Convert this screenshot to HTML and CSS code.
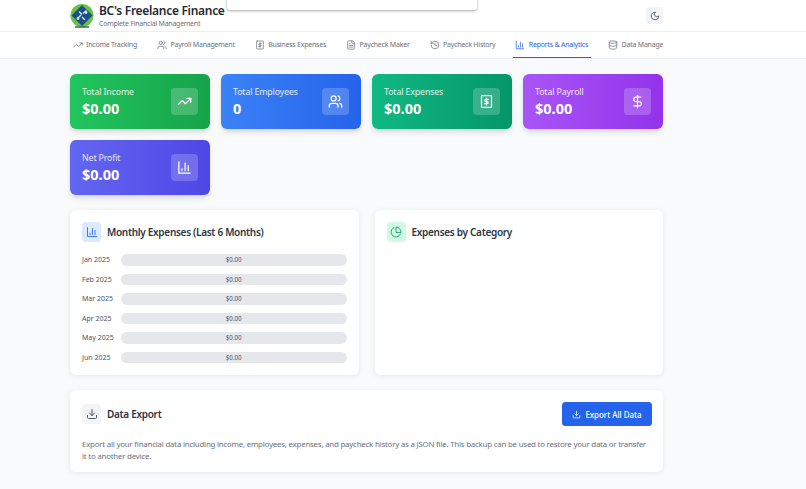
FILE: index.html
```html
<!DOCTYPE html>
<html lang="en">
<head>
<meta charset="utf-8">
<title>BC's Freelance Finance</title>
<link rel="stylesheet" href="styles.css">
</head>
<body>
<svg class="defs" width="0" height="0">
  <symbol id="i-trend" viewBox="0 0 24 24"><path d="M22 7 13.500 15.500 8.500 10.500 2 17"/><path d="M16 7h6v6"/></symbol>
  <symbol id="i-users" viewBox="0 0 24 24"><path d="M16 21v-2a4 4 0 0 0-4-4H6a4 4 0 0 0-4 4v2"/><circle cx="9" cy="7" r="4"/><path d="M22 21v-2a4 4 0 0 0-3-3.870"/><path d="M16 3.130a4 4 0 0 1 0 7.750"/></symbol>
  <symbol id="i-bill" viewBox="0 0 24 24"><rect x="4" y="2.500" width="16" height="19" rx="1"/><path d="M15 8.500H11a1.700 1.700 0 0 0 0 3.500h2a1.700 1.700 0 0 1 0 3.500H9"/><path d="M12 6.500v11"/></symbol>
  <symbol id="i-file" viewBox="0 0 24 24"><path d="M15 2H6a2 2 0 0 0-2 2v16a2 2 0 0 0 2 2h12a2 2 0 0 0 2-2V7Z"/><path d="M14 2v4a2 2 0 0 0 2 2h4"/><path d="M16 13H8"/><path d="M16 17H8"/><path d="M10 9H8"/></symbol>
  <symbol id="i-history" viewBox="0 0 24 24"><path d="M3 12a9 9 0 1 0 9-9 9.750 9.750 0 0 0-6.740 2.740L3 8"/><path d="M3 3v5h5"/><path d="M12 7v5l4 2"/></symbol>
  <symbol id="i-chart" viewBox="0 0 24 24"><path d="M3 3v18h18"/><path d="M18 17V9"/><path d="M13 17V5"/><path d="M8 17v-3"/></symbol>
  <symbol id="i-db" viewBox="0 0 24 24"><ellipse cx="12" cy="5" rx="9" ry="3"/><path d="M3 5v14a9 3 0 0 0 18 0V5"/><path d="M3 12a9 3 0 0 0 18 0"/></symbol>
  <symbol id="i-dollar" viewBox="0 0 24 24"><path d="M12 2v20"/><path d="M17 5H9.500a3.500 3.500 0 0 0 0 7h5a3.500 3.500 0 0 1 0 7H6"/></symbol>
  <symbol id="i-moon" viewBox="0 0 24 24"><path d="M12 3a6 6 0 0 0 9 9 9 9 0 1 1-9-9Z"/></symbol>
  <symbol id="i-pie" viewBox="0 0 24 24"><path d="M21.210 15.890A10 10 0 1 1 8 2.830"/><path d="M22 12A10 10 0 0 0 12 2v10z"/></symbol>
  <symbol id="i-down" viewBox="0 0 24 24"><path d="M21 15v4a2 2 0 0 1-2 2H5a2 2 0 0 1-2-2v-4"/><path d="m7 10 5 5 5-5"/><path d="M12 15V3"/></symbol>
</svg>

<div class="popup"></div>

<header class="topbar">
  <div class="wrap topbar-row">
    <div class="brand">
      <svg class="logo" viewBox="0 0 24 24">
        <circle cx="12" cy="11.500" r="11.500" fill="#6cc04a"/>
        <path d="M12 1 22.500 11.500 12 22 1.500 11.500Z" fill="#1b4f86"/>
        <path d="M7.500 14.500l3.500-3.500M13 9.500l3.500-3M9 7.500l3 3M12 13l3 3" stroke="#cfe8f2" stroke-width="1.400" fill="none"/>
        <circle cx="8" cy="14.500" r="1.400" fill="#cfe8f2"/><circle cx="16" cy="8.500" r="1.400" fill="#cfe8f2"/>
        <path d="M5 23h14" stroke="#1d6b3a" stroke-width="1.400"/>
      </svg>
      <div class="brand-text">
        <div class="brand-name">BC's Freelance Finance</div>
        <div class="brand-sub">Complete Financial Management</div>
      </div>
    </div>
    <button class="theme"><svg class="ic"><use href="#i-moon"/></svg></button>
  </div>
</header>

<nav class="tabs">
  <div class="wrap tabs-row">
    <a class="tab"><svg class="ic"><use href="#i-trend"/></svg>Income Tracking</a>
    <a class="tab"><svg class="ic"><use href="#i-users"/></svg>Payroll Management</a>
    <a class="tab"><svg class="ic"><use href="#i-bill"/></svg>Business Expenses</a>
    <a class="tab"><svg class="ic"><use href="#i-file"/></svg>Paycheck Maker</a>
    <a class="tab"><svg class="ic"><use href="#i-history"/></svg>Paycheck History</a>
    <a class="tab active"><svg class="ic"><use href="#i-chart"/></svg>Reports &amp; Analytics</a>
    <a class="tab"><svg class="ic"><use href="#i-db"/></svg>Data Management</a>
  </div>
</nav>

<main class="wrap main">
  <section class="stats">
    <div class="stat green"><div><div class="stat-label">Total Income</div><div class="stat-value">$0.00</div></div><span class="stat-icon"><svg class="ic"><use href="#i-trend"/></svg></span></div>
    <div class="stat blue"><div><div class="stat-label">Total Employees</div><div class="stat-value">0</div></div><span class="stat-icon"><svg class="ic"><use href="#i-users"/></svg></span></div>
    <div class="stat teal"><div><div class="stat-label">Total Expenses</div><div class="stat-value">$0.00</div></div><span class="stat-icon"><svg class="ic"><use href="#i-bill"/></svg></span></div>
    <div class="stat purple"><div><div class="stat-label">Total Payroll</div><div class="stat-value">$0.00</div></div><span class="stat-icon"><svg class="ic"><use href="#i-dollar"/></svg></span></div>
    <div class="stat indigo"><div><div class="stat-label">Net Profit</div><div class="stat-value">$0.00</div></div><span class="stat-icon"><svg class="ic"><use href="#i-chart"/></svg></span></div>
  </section>

  <section class="panels">
    <div class="panel">
      <div class="panel-head"><span class="chip chip-blue"><svg class="ic"><use href="#i-chart"/></svg></span><h2>Monthly Expenses (Last 6 Months)</h2></div>
      <div class="bars">
        <div class="bar-row"><span class="bar-month">Jan 2025</span><div class="bar">$0.00</div></div>
        <div class="bar-row"><span class="bar-month">Feb 2025</span><div class="bar">$0.00</div></div>
        <div class="bar-row"><span class="bar-month">Mar 2025</span><div class="bar">$0.00</div></div>
        <div class="bar-row"><span class="bar-month">Apr 2025</span><div class="bar">$0.00</div></div>
        <div class="bar-row"><span class="bar-month">May 2025</span><div class="bar">$0.00</div></div>
        <div class="bar-row"><span class="bar-month">Jun 2025</span><div class="bar">$0.00</div></div>
      </div>
    </div>
    <div class="panel">
      <div class="panel-head"><span class="chip chip-green"><svg class="ic"><use href="#i-pie"/></svg></span><h2>Expenses by Category</h2></div>
    </div>
  </section>

  <section class="panel export">
    <div class="export-head">
      <div class="panel-head flat"><span class="chip chip-gray"><svg class="ic"><use href="#i-down"/></svg></span><h2>Data Export</h2></div>
      <button class="export-btn"><svg class="ic"><use href="#i-down"/></svg>Export All Data</button>
    </div>
    <p class="export-text">Export all your financial data including income, employees, expenses, and paycheck history as a JSON file. This backup can be used to restore your data or transfer it to another device.</p>
  </section>
</main>
</body>
</html>
```

FILE: styles.css
```css
* { box-sizing: border-box; }
html, body { margin: 0; height: 489px; overflow: hidden; }
body {
  background: #f9fafb;
  color: #1f2937;
  font-family: "Noto Sans", "Open Sans", sans-serif;
  position: relative;
}
.defs { position: absolute; }
.ic {
  width: 1em; height: 1em; fill: none; stroke: currentColor;
  stroke-width: 2; stroke-linecap: round; stroke-linejoin: round; flex: none;
}
.wrap { width: 593px; margin-left: 70px; }

.popup {
  position: absolute; left: 227px; top: -20px; width: 250px; height: 30px;
  background: #fff; border-radius: 3px; z-index: 5;
  box-shadow: 0 1px 3px rgba(0,0,0,.35);
}

.topbar { background: #fff; height: 31px; }
.topbar-row { display: flex; justify-content: space-between; align-items: center; height: 31px; }
.brand { display: flex; align-items: center; gap: 5px; }
.logo { width: 24px; height: 24px; }
.brand-name { font-size: 12px; font-weight: 600; line-height: 15px; letter-spacing: -.3px; color: #1f2937; white-space: nowrap; }
.brand-sub { font-size: 7px; line-height: 9px; letter-spacing: -.25px; color: #6b7280; margin-top: 1px; }
.theme {
  width: 17px; height: 17px; border: 0; border-radius: 4px; padding: 0;
  background: #f3f4f6; color: #4b5563; font-size: 10px;
  display: flex; align-items: center; justify-content: center;
}

.tabs { background: #fff; height: 28px; border-top: 1px solid #eceef1; border-bottom: 1px solid #eceef1; }
.tabs-row { display: flex; gap: 15px; height: 26px; overflow: hidden; }
.tab {
  display: flex; align-items: center; gap: 3.500px; padding: 0 2.500px;
  font-size: 7px; font-weight: 400; letter-spacing: -.225px; color: #6b7280; white-space: nowrap;
  border-bottom: 1px solid transparent; flex: none;
}
.tab .ic { font-size: 10px; stroke-width: 1.800; }
.tab.active { color: #2563eb; border-bottom-color: #2563eb; }

.main { padding-top: 15px; }
.stats { display: grid; grid-template-columns: repeat(4, 1fr); gap: 11px; }
.stat {
  height: 55px; border-radius: 6px; padding: 0 12px; color: #fff;
  display: flex; align-items: center; justify-content: space-between;
  box-shadow: 0 4px 6px -1px rgba(0,0,0,.12), 0 2px 4px -2px rgba(0,0,0,.1);
}
.stat-label { font-size: 8.800px; line-height: 12px; letter-spacing: -.13px; opacity: .85; }
.stat-value { font-size: 14.500px; font-weight: 700; line-height: 20px; }
.stat-icon {
  width: 27px; height: 27px; border-radius: 4px; background: rgba(255,255,255,.2);
  display: flex; align-items: center; justify-content: center; font-size: 15px;
}
.green { background: linear-gradient(90deg, #22c55e, #16a34a); }
.blue { background: linear-gradient(90deg, #3b82f6, #2563eb); }
.teal { background: linear-gradient(90deg, #10b981, #059669); }
.purple { background: linear-gradient(90deg, #a855f7, #9333ea); }
.indigo { background: linear-gradient(90deg, #6366f1, #4f46e5); }

.panels { display: grid; grid-template-columns: 1fr 1fr; gap: 16px; margin-top: 15px; }
.panel {
  background: #fff; border-radius: 6px; height: 165px; padding: 12px;
  box-shadow: 0 1px 6px rgba(0,0,0,.08);
}
.panel-head { display: flex; align-items: center; gap: 6px; margin-bottom: 12px; }
.panel-head.flat { margin-bottom: 0; }
.panel-head h2 { margin: 0; font-size: 10px; font-weight: 600; letter-spacing: -.3px; color: #2b3544; }
.chip {
  width: 19px; height: 20px; border-radius: 4px; font-size: 12px;
  display: flex; align-items: center; justify-content: center;
}
.chip .ic { stroke-width: 1.700; }
.chip-blue { background: #dbeafe; color: #2563eb; }
.chip-green { background: #d1fae5; color: #059669; }
.chip-gray { background: #f3f4f6; color: #374151; }

.bars { display: flex; flex-direction: column; gap: 8px; }
.bar-row { display: flex; align-items: center; height: 11.500px; }
.bar-month { width: 39px; font-size: 7px; color: #4b5563; white-space: nowrap; flex: none; }
.bar {
  flex: 1; height: 11.500px; border-radius: 6px; background: #e5e7eb;
  font-size: 6.200px; line-height: 11.500px; text-align: center; color: #4b5563;
}

.export { height: 82px; margin-top: 15px; padding: 12px 11px 12px 12px; }
.export-head { display: flex; justify-content: space-between; align-items: center; }
.export-btn {
  width: 90px; height: 24px; border: 0; border-radius: 3.500px; background: #2563eb; color: #fff;
  font: 500 8px "Noto Sans", "Open Sans", sans-serif; letter-spacing: -.05px;
  display: flex; align-items: center; justify-content: center; gap: 4px;
}
.export-btn .ic { font-size: 9px; }
.export-text { margin: 12px 0 0; width: 566px; font-size: 7.900px; line-height: 12px; letter-spacing: -.22px; color: #6b7280; }
```
